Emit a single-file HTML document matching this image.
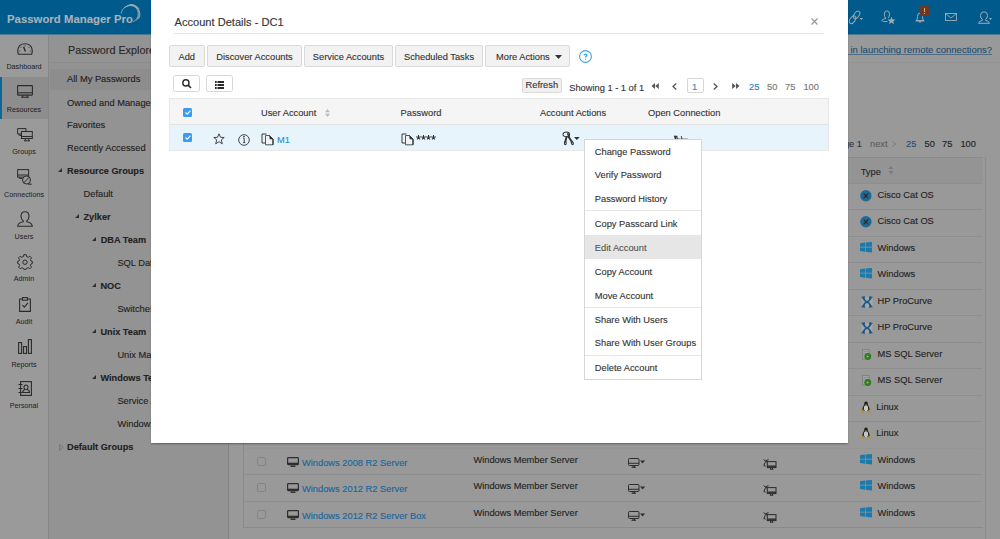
<!DOCTYPE html>
<html><head><meta charset="utf-8">
<style>
*{box-sizing:border-box;margin:0;padding:0}
html,body{width:1000px;height:539px;overflow:hidden}
body{position:relative;background:#999;font-family:"Liberation Sans",sans-serif;color:#1e1e1e;font-size:9.3px;line-height:1;-webkit-text-stroke:0.12px currentColor}
.a{position:absolute;white-space:nowrap;line-height:1}
svg{position:absolute;overflow:visible}
#hdr{left:0;top:0;width:1000px;height:35px;background:#005a8c;border-bottom:1px solid #4c7992}
#nav{left:0;top:35px;width:49px;height:504px;background:#9a9a9a;border-right:1px solid #868686}
#tree{left:49px;top:35px;width:180px;height:504px;background:#939393;border-right:1px solid #86837f}
.nl{position:absolute;left:0;width:48px;text-align:center;font-size:7.2px;color:#1c1c1c;line-height:1;-webkit-text-stroke:0}
.tr{position:absolute;font-size:9.3px;color:#1e1e1e;white-space:nowrap;margin-top:0.7px}
.tb{font-weight:bold;font-size:9.2px;color:#222}
.tri{position:absolute;width:0;height:0;border-style:solid}
#modal{left:151px;top:0;width:697px;height:443px;background:#fff;box-shadow:0 1.5px 1.5px rgba(0,0,0,.28)}
.btn{position:absolute;height:22px;background:#f2f2f2;border:1px solid #d9d9d9;border-radius:2px;color:#333;font-size:9.3px;line-height:20px;padding-top:1px;text-align:center}
.mi{position:absolute;left:10px;font-size:9.3px;color:#333;white-space:nowrap}
.rl{position:absolute;left:244px;width:738px;height:1px;background:#8e8e8e}
.bl{position:absolute;color:#1d5d87;font-size:9.3px;white-space:nowrap;margin-top:1px}
.bt{position:absolute;color:#222;font-size:9.3px;white-space:nowrap;margin-top:1.8px}
</style></head><body>
<!-- HEADER -->
<div id="hdr" class="a">
  <div class="a" style="left:7px;top:14.4px;font-size:11.3px;font-weight:bold;color:#a8b2b8;letter-spacing:0.05px">Password Manager Pro</div>
  <svg style="left:117.5px;top:3.3px" width="24" height="22" viewBox="0 0 26 24" fill="none" stroke="#a7b2b9" stroke-width="0.9">
    <path d="M3.2 11.5 C4.5 5.5 9 2.8 13 2.8 C18.5 2.8 22 6.8 22 12 C22 15.5 20 18.5 16.5 20.5"/>
    <path d="M6.5 5.5 C9.5 3.2 12.5 2.2 15 2.4 C20 3 23.2 7.2 23 12.5 C22.8 15.2 21.6 17.4 19.5 19.2"/>
    <path d="M10 3 C12.5 1.6 15.5 1.5 18 2.8 C21.8 4.8 24 8.5 23.8 12.8 C23.7 14.5 23.2 16 22.3 17.3"/>
    <path d="M13.5 1.8 C17 1.3 21 3.5 23 6.5"/>
  </svg>
  <!-- link icon -->
  <svg style="left:848px;top:10px" width="16" height="15" viewBox="0 0 16 15" fill="none" stroke="#9eacb4" stroke-width="0.95">
    <ellipse cx="8.6" cy="4.9" rx="2.5" ry="4.3" transform="rotate(35 8.6 4.9)"/>
    <ellipse cx="4.6" cy="9.7" rx="2.5" ry="4.3" transform="rotate(35 4.6 9.7)"/>
    <path d="M11.6 8 L15 8 L13.3 10 Z" fill="#9eacb4" stroke="none"/>
  </svg>
  <!-- person star -->
  <svg style="left:881px;top:10px" width="15" height="15" viewBox="0 0 15 15" fill="none" stroke="#9eacb4" stroke-width="0.95">
    <path d="M5 8.3 Q3.3 7.2 3.3 4.2 Q3.3 0.8 5.8 0.8 Q8.5 0.8 8.5 4.2 Q8.5 7 7 8.2"/>
    <path d="M5 8.3 Q0.8 9.2 0.8 10.6 Q1 11.8 6.5 11.6"/>
    <path d="M10.5 6.8 L11.6 9.5 L14.4 9.6 L12.3 11.4 L13 14.2 L10.5 12.6 L8 14.2 L8.7 11.4 L6.6 9.6 L9.4 9.5 Z" fill="#9eacb4" stroke="none"/>
  </svg>
  <!-- bell -->
  <svg style="left:915px;top:12px" width="10" height="11" viewBox="0 0 10 11" fill="none" stroke="#9eacb4" stroke-width="1">
    <path d="M1.5 8.5 Q2.5 7.5 2.5 4.5 Q2.5 1 5 1 Q7.5 1 7.5 4.5 Q7.5 7.5 8.5 8.5 Z M0.5 9 L9.5 9 M4 10.2 L6 10.2"/>
  </svg>
  <div class="a" style="left:920px;top:5.5px;width:9px;height:10px;background:#6e3726;border-radius:1px"></div>
  <div class="a" style="left:924px;top:7.5px;width:1px;height:4px;background:#d2b06a"></div>
  <div class="a" style="left:924px;top:12.5px;width:1px;height:1px;background:#d2b06a"></div>
  <!-- mail -->
  <svg style="left:945px;top:13px" width="12" height="8" viewBox="0 0 12 8" fill="none" stroke="#9eacb4" stroke-width="0.9">
    <rect x="0.5" y="0.5" width="11" height="7"/><path d="M0.5 0.5 L6 5 L11.5 0.5"/>
  </svg>
  <!-- user -->
  <svg style="left:978px;top:11px" width="14" height="13" viewBox="0 0 14 13" fill="none" stroke="#9eacb4" stroke-width="1">
    <path d="M6 0.8 Q9.5 0.8 9.5 4.5 Q9.5 7.5 7.5 8.5 L7.5 9.3 Q11 10 11.5 12.3 L0.5 12.3 Q1 10 4.5 9.3 L4.5 8.5 Q2.5 7.5 2.5 4.5 Q2.5 0.8 6 0.8 Z"/>
    <path d="M11 7 L14 7 L12.5 9 Z" fill="#9eacb4" stroke="none"/>
  </svg>
</div>
<!-- NAV -->
<div id="nav" class="a">
  <div class="a" style="left:0;top:42px;width:48px;height:42px;background:#8d8d8d"></div>
  <div class="a" style="left:0;top:42px;width:1.5px;height:42px;background:#0b679c"></div>
</div>
<svg style="left:17px;top:43px" width="16" height="12" viewBox="0 0 16 12" fill="none" stroke="#2b2b2b" stroke-width="1.1">
  <path d="M1.3 11.3 Q0.5 9 0.8 7 Q1.5 0.8 8 0.8 Q14.5 0.8 15.2 7 Q15.5 9 14.7 11.3 Z"/>
  <path d="M6.6 3.8 L8.4 8.6" stroke-width="1.4"/>
  <circle cx="8" cy="2.8" r="0.5" fill="#2b2b2b" stroke="none"/><circle cx="4" cy="4.2" r="0.5" fill="#2b2b2b" stroke="none"/><circle cx="12" cy="4.2" r="0.5" fill="#2b2b2b" stroke="none"/><circle cx="2.8" cy="8" r="0.5" fill="#2b2b2b" stroke="none"/><circle cx="13.2" cy="8" r="0.5" fill="#2b2b2b" stroke="none"/>
</svg>
<div class="nl" style="top:62.9px">Dashboard</div>
<svg style="left:17px;top:85px" width="16" height="13" viewBox="0 0 16 13" fill="none" stroke="#2b2b2b" stroke-width="1.1">
  <rect x="0.6" y="0.6" width="14.8" height="9.5" rx="0.5"/><path d="M0.6 7.8 L15.4 7.8"/><path d="M6 10.5 L5.5 12.3 M10 10.5 L10.5 12.3 M4 12.3 L12 12.3"/>
</svg>
<div class="nl" style="top:105.9px">Resources</div>
<svg style="left:17px;top:128px" width="16" height="14" viewBox="0 0 16 14" fill="none" stroke="#2b2b2b" stroke-width="1">
  <path d="M4 6 L0.6 6 L0.6 0.6 L9 0.6 L9 3"/><path d="M2 6 L2.5 7.5 L4 7.5"/>
  <rect x="4.5" y="3.5" width="10.8" height="7" fill="#9b9b9b"/><path d="M4.5 8.5 L15.3 8.5"/><path d="M8.5 10.5 L8 12.8 M11.5 10.5 L12 12.8 M7 12.8 L13 12.8"/>
</svg>
<div class="nl" style="top:147.9px">Groups</div>
<svg style="left:17px;top:169px" width="16" height="16" viewBox="0 0 16 16" fill="none" stroke="#2b2b2b" stroke-width="1">
  <rect x="0.6" y="0.6" width="11" height="7.5"/><path d="M0.6 6 L11.6 6 M2 8 L2.5 9.5 L5 9.5"/>
  <circle cx="9.5" cy="11" r="4" fill="#9b9b9b"/><path d="M6.8 13.8 L12.3 8.2"/><path d="M11 15.2 L14.8 15.2"/>
</svg>
<div class="nl" style="top:190.6px">Connections</div>
<svg style="left:17px;top:211px" width="16" height="16" viewBox="0 0 16 16" fill="none" stroke="#2b2b2b" stroke-width="1.1">
  <path d="M8 0.8 Q12 0.8 12 5 Q12 8.5 9.8 9.8 L9.8 10.8 Q15 11.8 15.3 15.2 L0.7 15.2 Q1 11.8 6.2 10.8 L6.2 9.8 Q4 8.5 4 5 Q4 0.8 8 0.8 Z"/>
</svg>
<div class="nl" style="top:232.8px">Users</div>
<svg style="left:17px;top:254px" width="16" height="16" viewBox="0 0 16 16" fill="none" stroke="#2b2b2b" stroke-width="1">
  <path d="M6.8 0.7 L9.2 0.7 L9.6 2.6 L11.2 3.3 L12.8 2.2 L14.5 3.9 L13.4 5.5 L14.1 7.1 L15.3 7.4 L15.3 9.6 L14.1 9.9 L13.4 11.5 L14.5 13.1 L12.8 14.8 L11.2 13.7 L9.6 14.4 L9.2 15.3 L6.8 15.3 L6.4 14.4 L4.8 13.7 L3.2 14.8 L1.5 13.1 L2.6 11.5 L1.9 9.9 L0.7 9.6 L0.7 7.4 L1.9 7.1 L2.6 5.5 L1.5 3.9 L3.2 2.2 L4.8 3.3 L6.4 2.6 Z"/>
  <circle cx="8" cy="8.2" r="2.2"/>
</svg>
<div class="nl" style="top:275.4px">Admin</div>
<svg style="left:19px;top:297px" width="12" height="15" viewBox="0 0 12 15" fill="none" stroke="#2b2b2b" stroke-width="1.1">
  <path d="M3.5 2 L0.6 2 L0.6 14.4 L11.4 14.4 L11.4 2 L8.5 2"/><rect x="3.5" y="0.6" width="5" height="2.6"/><path d="M3.3 8 L5.3 10.2 L9 5.8"/>
</svg>
<div class="nl" style="top:317.7px">Audit</div>
<svg style="left:18px;top:339px" width="14" height="15" viewBox="0 0 14 15" fill="none" stroke="#2b2b2b" stroke-width="1.1">
  <rect x="0.6" y="3.6" width="3" height="10.8"/><rect x="5.5" y="7.6" width="3" height="6.8"/><rect x="10.4" y="0.6" width="3" height="13.8"/>
</svg>
<div class="nl" style="top:360.7px">Reports</div>
<svg style="left:18px;top:381px" width="14" height="15" viewBox="0 0 14 15" fill="none" stroke="#2b2b2b" stroke-width="1.1">
  <rect x="2.6" y="0.6" width="10.8" height="13.8"/><path d="M0.5 3.5 L4.5 3.5 M0.5 7.5 L4.5 7.5 M0.5 11.5 L4.5 11.5"/>
  <path d="M8 4 Q10 4 10 6.3 Q10 8 9 8.5 Q11.5 9 11.5 11.5 L4.8 11.5 Q4.8 9 7 8.5 Q6 8 6 6.3 Q6 4 8 4 Z"/>
</svg>
<div class="nl" style="top:401.8px">Personal</div>

<!-- TREE -->
<div id="tree" class="a"></div>
<div class="a" style="left:50px;top:62px;width:178px;height:1px;background:#8b8b8b"></div>

<div class="a" style="left:50px;top:69px;width:178px;height:21px;background:#8d8d8d"></div>
<div class="tr" style="left:68px;top:44.3px;font-size:10.8px;color:#262626">Password Explorer</div>
<div class="tr" style="left:67px;top:74.6px">All My Passwords</div>
<div class="tr" style="left:67px;top:97.9px">Owned and Managed</div>
<div class="tr" style="left:67px;top:119.9px">Favorites</div>
<div class="tr" style="left:67px;top:143.1px">Recently Accessed</div>
<div class="tri" style="left:58.0px;top:168.2px;border-width:0 0 4.2px 4.2px;border-color:transparent transparent #2e2e2e transparent"></div>
<div class="tr tb" style="left:67px;top:166.7px">Resource Groups</div>
<div class="tr" style="left:83.5px;top:189.4px">Default</div>
<div class="tri" style="left:75.0px;top:214.2px;border-width:0 0 4.2px 4.2px;border-color:transparent transparent #2e2e2e transparent"></div>
<div class="tr tb" style="left:83.5px;top:212.6px">Zylker</div>
<div class="tri" style="left:92.0px;top:237.2px;border-width:0 0 4.2px 4.2px;border-color:transparent transparent #2e2e2e transparent"></div>
<div class="tr tb" style="left:100.7px;top:235.7px">DBA Team</div>
<div class="tr" style="left:117.4px;top:258.4px">SQL Database</div>
<div class="tri" style="left:92.0px;top:283.2px;border-width:0 0 4.2px 4.2px;border-color:transparent transparent #2e2e2e transparent"></div>
<div class="tr tb" style="left:100.4px;top:281.6px">NOC</div>
<div class="tr" style="left:117.4px;top:304.4px">Switches</div>
<div class="tri" style="left:92.0px;top:329.0px;border-width:0 0 4.2px 4.2px;border-color:transparent transparent #2e2e2e transparent"></div>
<div class="tr tb" style="left:100.4px;top:327.4px">Unix Team</div>
<div class="tr" style="left:117.4px;top:350.2px">Unix Machines</div>
<div class="tri" style="left:92.0px;top:374.7px;border-width:0 0 4.2px 4.2px;border-color:transparent transparent #2e2e2e transparent"></div>
<div class="tr tb" style="left:100.4px;top:373.2px">Windows Team</div>
<div class="tr" style="left:117.4px;top:396px">Service Accounts</div>
<div class="tr" style="left:117.4px;top:418.9px">Windows</div>
<svg style="left:59px;top:443.5px" width="5" height="7" viewBox="0 0 5 7" fill="none" stroke="#707070" stroke-width="0.8"><path d="M0.6 0.6 L4 3.5 L0.6 6.4 Z"/></svg>
<div class="tr tb" style="left:67px;top:441.9px">Default Groups</div>
<!-- MAIN BG -->
<div class="bl" style="left:0;width:992px;text-align:right;top:45.4px;text-decoration:underline;text-decoration-color:#4d6c84;color:#1f4f73;margin-top:-0.5px;font-size:9.5px">Need help in launching remote connections?</div>
<div class="a" style="left:230px;top:62px;width:770px;height:1px;background:#939393"></div>
<div class="bt" style="left:0;width:862px;text-align:right;top:138.6px;color:#333">&laquo; previous &nbsp;&nbsp; Page 1</div>
<div class="bt" style="left:870px;top:138.6px;color:#5e5e5e">next</div>
<svg style="left:892px;top:141.2px" width="4.5" height="6" viewBox="0 0 4.5 6" fill="none" stroke="#6e6e6e" stroke-width="0.8"><path d="M0.5 0.4 L3.8 3 L0.5 5.6"/></svg>
<div class="bt" style="left:906px;top:138.6px;color:#1f4f73">25</div>
<div class="bt" style="left:924.5px;top:138.6px">50</div>
<div class="bt" style="left:942px;top:138.6px">75</div>
<div class="bt" style="left:960.4px;top:138.6px">100</div>
<div class="a" style="left:243px;top:157px;width:740px;height:371px;border:1px solid #8a8a8a;border-right:none;background:#999"></div>
<div class="a" style="left:244px;top:158px;width:739px;height:25px;background:#949494"></div>
<div class="a" style="left:985px;top:157px;width:1px;height:382px;background:#8a8a8a"></div>
<div class="bt" style="left:860.7px;top:166px;color:#262626">Type</div>
<svg style="left:888px;top:165px" width="6" height="10" viewBox="0 0 6 10" fill="#7a7a7a"><path d="M0.5 4 L3 0.8 L5.5 4 Z M0.5 6 L3 9.2 L5.5 6 Z"/></svg>
<div class="rl" style="top:183px"></div>
<div class="rl" style="top:209px"></div>
<div class="rl" style="top:236px"></div>
<div class="rl" style="top:262px"></div>
<div class="rl" style="top:289px"></div>
<div class="rl" style="top:315px"></div>
<div class="rl" style="top:342px"></div>
<div class="rl" style="top:368px"></div>
<div class="rl" style="top:395px"></div>
<div class="rl" style="top:421px"></div>
<div class="rl" style="top:448px;background:#969494"></div>
<div class="rl" style="top:474px"></div>
<div class="rl" style="top:501px"></div>
<svg style="left:860.2px;top:189.7px" width="12" height="12" viewBox="0 0 12 12"><circle cx="5.9" cy="5.8" r="5.7" fill="#1b6b98"/><path d="M3.6 3.4 L8.3 8.3 M8.3 3.4 L3.6 8.3" stroke="#33251f" stroke-width="1.2"/><path d="M3.2 3 L4.8 3.6 L3.8 4.6 Z M8.7 8.7 L7.1 8.1 L8.1 7.1 Z" fill="#8a4a22"/></svg>
<div class="bt" style="left:877.5px;top:189.3px">Cisco Cat OS</div>
<svg style="left:860.2px;top:215.7px" width="12" height="12" viewBox="0 0 12 12"><circle cx="5.9" cy="5.8" r="5.7" fill="#1b6b98"/><path d="M3.6 3.4 L8.3 8.3 M8.3 3.4 L3.6 8.3" stroke="#33251f" stroke-width="1.2"/><path d="M3.2 3 L4.8 3.6 L3.8 4.6 Z M8.7 8.7 L7.1 8.1 L8.1 7.1 Z" fill="#8a4a22"/></svg>
<div class="bt" style="left:877.5px;top:215.3px">Cisco Cat OS</div>
<svg style="left:860.2px;top:242.1px" width="12" height="10.5" viewBox="0 0 12 10.5" fill="#1b7aab"><path d="M0 1.3 L5 0.6 L5 4.8 L0 4.8 Z M5.6 0.5 L12 0 L12 4.8 L5.6 4.8 Z M0 5.5 L5 5.5 L5 9.7 L0 9.1 Z M5.6 5.5 L12 5.5 L12 10.5 L5.6 9.8 Z"/></svg>
<div class="bt" style="left:877.5px;top:242.3px">Windows</div>
<svg style="left:860.2px;top:268.1px" width="12" height="10.5" viewBox="0 0 12 10.5" fill="#1b7aab"><path d="M0 1.3 L5 0.6 L5 4.8 L0 4.8 Z M5.6 0.5 L12 0 L12 4.8 L5.6 4.8 Z M0 5.5 L5 5.5 L5 9.7 L0 9.1 Z M5.6 5.5 L12 5.5 L12 10.5 L5.6 9.8 Z"/></svg>
<div class="bt" style="left:877.5px;top:268.3px">Windows</div>
<svg style="left:860.5px;top:295.5px" width="12" height="12" viewBox="0 0 12 12"><rect x="0.5" y="0.5" width="11" height="11" fill="#a6a6a6"/><path d="M2.2 2.2 Q4 5.6 6 6 Q8 6.4 9.8 9.8 M9.8 2.2 Q8 5.6 6 6 Q4 6.4 2.2 9.8" stroke="#1d5786" stroke-width="1.7" fill="none"/><path d="M0.6 1.2 L3.6 0.6 L3.2 3.4 Z M11.4 1.2 L8.4 0.6 L8.8 3.4 Z M0.6 10.8 L3.6 11.4 L3.2 8.6 Z M11.4 10.8 L8.4 11.4 L8.8 8.6 Z" fill="#1d5786" stroke="#1d5786" stroke-width="0.8" stroke-linejoin="round"/></svg>
<div class="bt" style="left:877.5px;top:295.3px">HP ProCurve</div>
<svg style="left:860.5px;top:321.5px" width="12" height="12" viewBox="0 0 12 12"><rect x="0.5" y="0.5" width="11" height="11" fill="#a6a6a6"/><path d="M2.2 2.2 Q4 5.6 6 6 Q8 6.4 9.8 9.8 M9.8 2.2 Q8 5.6 6 6 Q4 6.4 2.2 9.8" stroke="#1d5786" stroke-width="1.7" fill="none"/><path d="M0.6 1.2 L3.6 0.6 L3.2 3.4 Z M11.4 1.2 L8.4 0.6 L8.8 3.4 Z M0.6 10.8 L3.6 11.4 L3.2 8.6 Z M11.4 10.8 L8.4 11.4 L8.8 8.6 Z" fill="#1d5786" stroke="#1d5786" stroke-width="0.8" stroke-linejoin="round"/></svg>
<div class="bt" style="left:877.5px;top:321.3px">HP ProCurve</div>
<svg style="left:862px;top:348.5px" width="10" height="11" viewBox="0 0 10 11"><rect x="0.4" y="0.4" width="6.6" height="9.6" fill="#a3a3a3" stroke="#7d7d7d" stroke-width="0.8"/><path d="M1.2 2.5 L6.2 2.5 M1.2 4.5 L6.2 4.5 M1.2 6.5 L6.2 6.5" stroke="#8a8a8a" stroke-width="0.7"/><circle cx="5.8" cy="7.5" r="3.4" fill="#2e7d1e"/><path d="M4.8 6.3 L7 7.5 L4.8 8.7 Z" fill="#9cc090"/></svg>
<div class="bt" style="left:877.5px;top:348.3px">MS SQL Server</div>
<svg style="left:862px;top:374.5px" width="10" height="11" viewBox="0 0 10 11"><rect x="0.4" y="0.4" width="6.6" height="9.6" fill="#a3a3a3" stroke="#7d7d7d" stroke-width="0.8"/><path d="M1.2 2.5 L6.2 2.5 M1.2 4.5 L6.2 4.5 M1.2 6.5 L6.2 6.5" stroke="#8a8a8a" stroke-width="0.7"/><circle cx="5.8" cy="7.5" r="3.4" fill="#2e7d1e"/><path d="M4.8 6.3 L7 7.5 L4.8 8.7 Z" fill="#9cc090"/></svg>
<div class="bt" style="left:877.5px;top:374.3px">MS SQL Server</div>
<svg style="left:860.5px;top:401.2px" width="10" height="12" viewBox="0 0 10 12"><ellipse cx="5" cy="2.8" rx="1.8" ry="2.4" fill="#1e1e1e"/><path d="M3.2 3.5 Q1 7 1.2 10 L8.8 10 Q9 7 6.8 3.5 Z" fill="#1e1e1e"/><ellipse cx="5" cy="7.3" rx="2.1" ry="3" fill="#c8c8c8"/><path d="M0 10 L2.2 8.3 L3.6 11.2 L1.2 11.5 Z M10 10 L7.8 8.3 L6.4 11.2 L8.8 11.5 Z" fill="#b8901a"/><path d="M4.2 3.3 L5.8 3.3 L5 4.4 Z" fill="#c09a1a"/></svg>
<div class="bt" style="left:876.2px;top:401.3px">Linux</div>
<svg style="left:860.5px;top:427.2px" width="10" height="12" viewBox="0 0 10 12"><ellipse cx="5" cy="2.8" rx="1.8" ry="2.4" fill="#1e1e1e"/><path d="M3.2 3.5 Q1 7 1.2 10 L8.8 10 Q9 7 6.8 3.5 Z" fill="#1e1e1e"/><ellipse cx="5" cy="7.3" rx="2.1" ry="3" fill="#c8c8c8"/><path d="M0 10 L2.2 8.3 L3.6 11.2 L1.2 11.5 Z M10 10 L7.8 8.3 L6.4 11.2 L8.8 11.5 Z" fill="#b8901a"/><path d="M4.2 3.3 L5.8 3.3 L5 4.4 Z" fill="#c09a1a"/></svg>
<div class="bt" style="left:876.2px;top:427.3px">Linux</div>
<svg style="left:860.2px;top:454.1px" width="12" height="10.5" viewBox="0 0 12 10.5" fill="#1b7aab"><path d="M0 1.3 L5 0.6 L5 4.8 L0 4.8 Z M5.6 0.5 L12 0 L12 4.8 L5.6 4.8 Z M0 5.5 L5 5.5 L5 9.7 L0 9.1 Z M5.6 5.5 L12 5.5 L12 10.5 L5.6 9.8 Z"/></svg>
<div class="bt" style="left:877.5px;top:454.3px">Windows</div>
<svg style="left:860.2px;top:480.1px" width="12" height="10.5" viewBox="0 0 12 10.5" fill="#1b7aab"><path d="M0 1.3 L5 0.6 L5 4.8 L0 4.8 Z M5.6 0.5 L12 0 L12 4.8 L5.6 4.8 Z M0 5.5 L5 5.5 L5 9.7 L0 9.1 Z M5.6 5.5 L12 5.5 L12 10.5 L5.6 9.8 Z"/></svg>
<div class="bt" style="left:877.5px;top:480.3px">Windows</div>
<svg style="left:860.2px;top:507.1px" width="12" height="10.5" viewBox="0 0 12 10.5" fill="#1b7aab"><path d="M0 1.3 L5 0.6 L5 4.8 L0 4.8 Z M5.6 0.5 L12 0 L12 4.8 L5.6 4.8 Z M0 5.5 L5 5.5 L5 9.7 L0 9.1 Z M5.6 5.5 L12 5.5 L12 10.5 L5.6 9.8 Z"/></svg>
<div class="bt" style="left:877.5px;top:507.3px">Windows</div>
<div class="a" style="left:257.2px;top:457px;width:8.7px;height:8.7px;border:1px solid #848484;border-radius:2px"></div>
<svg style="left:287px;top:456.9px" width="12" height="10" viewBox="0 0 12 10" fill="none" stroke="#2e2e2e" stroke-width="1.2"><rect x="0.6" y="0.6" width="10.8" height="7" rx="0.8"/><path d="M0.6 6.6 L11.4 6.6" stroke-width="1.8"/><path d="M3.5 9.4 L8.5 9.4 M5 8 L4.6 9.4 M7 8 L7.4 9.4" stroke-width="1"/></svg>
<div class="bl" style="left:302px;top:458.0px;color:#1566a0">Windows 2008 R2 Server</div>
<div class="bt" style="left:473.4px;top:453.8px">Windows Member Server</div>
<svg style="left:628px;top:458px" width="18" height="10" viewBox="0 0 18 10" fill="none" stroke="#2e2e2e" stroke-width="1"><rect x="0.5" y="0.5" width="10.5" height="7" rx="1"/><path d="M0.5 5.3 L11 5.3"/><path d="M3.5 9.3 L8 9.3 M5 7.5 L5 9.3 M6.5 7.5 L6.5 9.3"/><path d="M12 2.6 L17.2 2.6 L14.6 5.5 Z" fill="#2e2e2e" stroke="none"/></svg>
<svg style="left:763px;top:459px" width="14" height="11" viewBox="0 0 14 11" fill="none" stroke="#2a2a2a" stroke-width="1"><path d="M0.6 0.6 L2.6 2 L4.2 3.5 M4 0.8 L2.2 3.5 L0.8 6.5 L2.6 7.2 M2.6 2 L5.5 0.6"/><rect x="4.3" y="2.6" width="8.7" height="6" fill="#9a9a9a"/><path d="M4.3 7.2 L13 7.2" stroke-width="1.4"/><path d="M7 10.2 L10.3 10.2 M7.5 8.6 L7.5 10.2 M9.5 8.6 L9.5 10.2"/></svg>
<div class="a" style="left:257.2px;top:483px;width:8.7px;height:8.7px;border:1px solid #848484;border-radius:2px"></div>
<svg style="left:287px;top:482.9px" width="12" height="10" viewBox="0 0 12 10" fill="none" stroke="#2e2e2e" stroke-width="1.2"><rect x="0.6" y="0.6" width="10.8" height="7" rx="0.8"/><path d="M0.6 6.6 L11.4 6.6" stroke-width="1.8"/><path d="M3.5 9.4 L8.5 9.4 M5 8 L4.6 9.4 M7 8 L7.4 9.4" stroke-width="1"/></svg>
<div class="bl" style="left:302px;top:484.0px;color:#1566a0">Windows 2012 R2 Server</div>
<div class="bt" style="left:473.4px;top:479.8px">Windows Member Server</div>
<svg style="left:628px;top:484px" width="18" height="10" viewBox="0 0 18 10" fill="none" stroke="#2e2e2e" stroke-width="1"><rect x="0.5" y="0.5" width="10.5" height="7" rx="1"/><path d="M0.5 5.3 L11 5.3"/><path d="M3.5 9.3 L8 9.3 M5 7.5 L5 9.3 M6.5 7.5 L6.5 9.3"/><path d="M12 2.6 L17.2 2.6 L14.6 5.5 Z" fill="#2e2e2e" stroke="none"/></svg>
<svg style="left:763px;top:485px" width="14" height="11" viewBox="0 0 14 11" fill="none" stroke="#2a2a2a" stroke-width="1"><path d="M0.6 0.6 L2.6 2 L4.2 3.5 M4 0.8 L2.2 3.5 L0.8 6.5 L2.6 7.2 M2.6 2 L5.5 0.6"/><rect x="4.3" y="2.6" width="8.7" height="6" fill="#9a9a9a"/><path d="M4.3 7.2 L13 7.2" stroke-width="1.4"/><path d="M7 10.2 L10.3 10.2 M7.5 8.6 L7.5 10.2 M9.5 8.6 L9.5 10.2"/></svg>
<div class="a" style="left:257.2px;top:510px;width:8.7px;height:8.7px;border:1px solid #848484;border-radius:2px"></div>
<svg style="left:287px;top:509.9px" width="12" height="10" viewBox="0 0 12 10" fill="none" stroke="#2e2e2e" stroke-width="1.2"><rect x="0.6" y="0.6" width="10.8" height="7" rx="0.8"/><path d="M0.6 6.6 L11.4 6.6" stroke-width="1.8"/><path d="M3.5 9.4 L8.5 9.4 M5 8 L4.6 9.4 M7 8 L7.4 9.4" stroke-width="1"/></svg>
<div class="bl" style="left:302px;top:511.0px;color:#1566a0">Windows 2012 R2 Server Box</div>
<div class="bt" style="left:473.4px;top:506.8px">Windows Member Server</div>
<svg style="left:628px;top:511px" width="18" height="10" viewBox="0 0 18 10" fill="none" stroke="#2e2e2e" stroke-width="1"><rect x="0.5" y="0.5" width="10.5" height="7" rx="1"/><path d="M0.5 5.3 L11 5.3"/><path d="M3.5 9.3 L8 9.3 M5 7.5 L5 9.3 M6.5 7.5 L6.5 9.3"/><path d="M12 2.6 L17.2 2.6 L14.6 5.5 Z" fill="#2e2e2e" stroke="none"/></svg>
<svg style="left:763px;top:512px" width="14" height="11" viewBox="0 0 14 11" fill="none" stroke="#2a2a2a" stroke-width="1"><path d="M0.6 0.6 L2.6 2 L4.2 3.5 M4 0.8 L2.2 3.5 L0.8 6.5 L2.6 7.2 M2.6 2 L5.5 0.6"/><rect x="4.3" y="2.6" width="8.7" height="6" fill="#9a9a9a"/><path d="M4.3 7.2 L13 7.2" stroke-width="1.4"/><path d="M7 10.2 L10.3 10.2 M7.5 8.6 L7.5 10.2 M9.5 8.6 L9.5 10.2"/></svg>
<!-- MODAL -->
<div id="modal" class="a"></div>
<div class="a" style="left:174.5px;top:16.6px;font-size:11.1px;color:#333">Account Details - DC1</div>
<svg style="left:811px;top:18px" width="7" height="7" viewBox="0 0 7 7" stroke="#9a9a9a" stroke-width="1.3"><path d="M0.5 0.5 L6.5 6.5 M6.5 0.5 L0.5 6.5"/></svg>
<div class="a" style="left:174px;top:33px;width:650px;height:1px;background:#e6e6e6"></div>
<div class="btn" style="left:169px;top:45px;width:35.5px">Add</div>
<div class="btn" style="left:207px;top:45px;width:95px">Discover Accounts</div>
<div class="btn" style="left:304px;top:45px;width:89px">Service Accounts</div>
<div class="btn" style="left:395px;top:45px;width:88px">Scheduled Tasks</div>
<div class="btn" style="left:485px;top:45px;width:85px;text-align:left;padding-left:10px">More Actions</div>
<svg style="left:554.5px;top:55px" width="7" height="4" viewBox="0 0 7 4" fill="#333"><path d="M0 0 L7 0 L3.5 4 Z"/></svg>
<svg style="left:579px;top:49.7px" width="13" height="13" viewBox="0 0 13 13" fill="none" stroke="#3ea2f0" stroke-width="1.1"><circle cx="6.5" cy="6.5" r="5.9"/></svg>
<svg style="left:579px;top:49.7px" width="13" height="13" viewBox="0 0 13 13" fill="none" stroke="#3ea2f0" stroke-width="1.25"><path d="M5.1 5.4 Q5.1 4 6.6 4 Q8 4 8 5.3 Q8 6 7.2 6.4 Q6.6 6.7 6.6 7.6"/><circle cx="6.6" cy="9.1" r="0.7" fill="#3ea2f0" stroke="none"/></svg>
<!-- search/list -->
<div class="a" style="left:172.5px;top:75px;width:27px;height:17px;border:1px solid #d8d8d8;border-radius:2.5px;background:#fff"></div>
<svg style="left:181.5px;top:79px" width="10" height="10" viewBox="0 0 10 10" fill="none" stroke="#2a2a2a" stroke-width="1.4"><circle cx="3.9" cy="3.9" r="3.1"/><path d="M6.1 6.1 L9 9" stroke-width="1.6"/></svg>
<div class="a" style="left:206px;top:75px;width:26.5px;height:17px;border:1px solid #d8d8d8;border-radius:2.5px;background:#fff"></div>
<svg style="left:215px;top:81px" width="9" height="8" viewBox="0 0 9 8" fill="#2a2a2a"><rect x="0" y="0" width="1.7" height="2"/><rect x="2.5" y="0" width="6.5" height="2"/><rect x="0" y="3" width="1.7" height="2"/><rect x="2.5" y="3" width="6.5" height="2"/><rect x="0" y="6" width="1.7" height="2"/><rect x="2.5" y="6" width="6.5" height="2"/></svg>
<!-- refresh + pagination -->
<div class="a" style="left:522px;top:77.6px;width:39.6px;height:15px;background:#f0f0f0;border:1px solid #dadada;border-radius:2px;font-size:9.3px;color:#333;text-align:center;line-height:13px">Refresh</div>
<div class="a" style="margin-top:1px;left:569.2px;top:82.6px;font-size:9.3px;color:#333">Showing 1 - 1 of 1</div>
<svg style="left:650.5px;top:83px" width="8" height="6" viewBox="0 0 8 6" fill="#555"><path d="M4 0 L0.5 3 L4 6 Z M7.8 0 L4.3 3 L7.8 6 Z"/></svg>
<svg style="left:671.5px;top:82.5px" width="5" height="7" viewBox="0 0 5 7" fill="none" stroke="#555" stroke-width="1.3"><path d="M4.3 0.5 L1 3.5 L4.3 6.5"/></svg>
<div class="a" style="left:686.5px;top:77.7px;width:17px;height:15px;border:1px solid #d6d6d6;border-radius:1.5px"></div>
<div class="a" style="margin-top:1px;left:692px;top:81.6px;font-size:9.3px;color:#2a86c8">1</div>
<svg style="left:713px;top:82.5px" width="5" height="7" viewBox="0 0 5 7" fill="none" stroke="#555" stroke-width="1.3"><path d="M0.7 0.5 L4 3.5 L0.7 6.5"/></svg>
<svg style="left:731.5px;top:83px" width="8" height="6" viewBox="0 0 8 6" fill="#555"><path d="M0.2 0 L3.7 3 L0.2 6 Z M4 0 L7.5 3 L4 6 Z"/></svg>
<div class="a" style="margin-top:1px;left:749px;top:81.6px;font-size:9.3px;color:#2a7fc0">25</div>
<div class="a" style="margin-top:1px;left:767px;top:81.6px;font-size:9.3px;color:#777">50</div>
<div class="a" style="margin-top:1px;left:785px;top:81.6px;font-size:9.3px;color:#777">75</div>
<div class="a" style="margin-top:1px;left:803.4px;top:81.6px;font-size:9.3px;color:#777">100</div>
<!-- table -->
<div class="a" style="left:169px;top:98px;width:659.5px;height:53px;border:1px solid #e8e8e8;background:#e8f4fc"></div>
<div class="a" style="left:170px;top:99px;width:657.5px;height:26px;background:#f5f5f5;border-bottom:1px solid #e3e3e3"></div>
<div class="a" style="left:183px;top:108px;width:9px;height:9px;border-radius:1.5px;background:#3b9bf0"></div>
<svg style="left:184.5px;top:110px" width="6" height="5" viewBox="0 0 6 5" fill="none" stroke="#fff" stroke-width="1.1"><path d="M0.5 2.5 L2.2 4.2 L5.5 0.6"/></svg>
<div class="a" style="margin-top:1px;left:261px;top:108.1px;font-size:9.3px;color:#333">User Account</div>
<svg style="left:325px;top:108.5px" width="5" height="8" viewBox="0 0 5 8" fill="#bbb"><path d="M0 3.2 L2.5 0 L5 3.2 Z M0 4.8 L2.5 8 L5 4.8 Z"/></svg>
<div class="a" style="margin-top:1px;left:400.6px;top:108.1px;font-size:9.3px;color:#333">Password</div>
<div class="a" style="margin-top:1px;left:540px;top:108.1px;font-size:9.3px;color:#333">Account Actions</div>
<div class="a" style="margin-top:1px;left:648px;top:108.1px;font-size:9.3px;color:#333">Open Connection</div>
<!-- row -->
<div class="a" style="left:183px;top:133px;width:9px;height:9px;border-radius:1.5px;background:#3b9bf0"></div>
<svg style="left:184.5px;top:135px" width="6" height="5" viewBox="0 0 6 5" fill="none" stroke="#fff" stroke-width="1.1"><path d="M0.5 2.5 L2.2 4.2 L5.5 0.6"/></svg>
<svg style="left:212.5px;top:132.5px" width="12" height="12" viewBox="0 0 12 12" fill="none" stroke="#333" stroke-width="0.9"><path d="M6 0.8 L7.5 4.3 L11.2 4.5 L8.3 6.9 L9.3 10.8 L6 8.7 L2.7 10.8 L3.7 6.9 L0.8 4.5 L4.5 4.3 Z"/></svg>
<svg style="left:237.5px;top:133.5px" width="12" height="12" viewBox="0 0 12 12" fill="none" stroke="#333" stroke-width="0.9"><circle cx="6" cy="6" r="5.3"/><path d="M5 4.2 L6.2 4.2 L6.2 8.6 M5 8.6 L7.3 8.6" /><circle cx="6" cy="2.7" r="0.4" fill="#333"/></svg>
<svg style="left:261px;top:132.5px" width="13" height="13" viewBox="0 0 13 13" fill="none" stroke-width="1"><path d="M5.5 1 L1 1 L1 10 L4 10" stroke="#3a3a3a"/><path d="M4.5 2.5 L8.5 2.5 L12 6 L12 11.8 L4.5 11.8 Z" fill="#f3f3f3" stroke="#555"/><path d="M12 6 L12 11.8" stroke="#222"/><path d="M8.5 2.5 L12 6 L9 6 Z" fill="#333" stroke="#333" stroke-width="0.6"/></svg>
<div class="a" style="margin-top:1px;left:277px;top:135px;font-size:9.3px;color:#2a8ee0">M1</div>
<svg style="left:400.5px;top:132.5px" width="13" height="13" viewBox="0 0 13 13" fill="none" stroke-width="1"><path d="M5.5 1 L1 1 L1 10 L4 10" stroke="#3a3a3a"/><path d="M4.5 2.5 L8.5 2.5 L12 6 L12 11.8 L4.5 11.8 Z" fill="#f3f3f3" stroke="#555"/><path d="M12 6 L12 11.8" stroke="#222"/><path d="M8.5 2.5 L12 6 L9 6 Z" fill="#333" stroke="#333" stroke-width="0.6"/></svg>
<svg style="left:416.3px;top:135px" width="5" height="5" viewBox="-2.5 -2.5 5 5" stroke="#333" stroke-width="1.05"><path d="M0 -2.4 L0 0 M0 0 L2.3 -0.75 M0 0 L1.4 1.95 M0 0 L-1.4 1.95 M0 0 L-2.3 -0.75"/></svg><svg style="left:421.2px;top:135px" width="5" height="5" viewBox="-2.5 -2.5 5 5" stroke="#333" stroke-width="1.05"><path d="M0 -2.4 L0 0 M0 0 L2.3 -0.75 M0 0 L1.4 1.95 M0 0 L-1.4 1.95 M0 0 L-2.3 -0.75"/></svg><svg style="left:426.1px;top:135px" width="5" height="5" viewBox="-2.5 -2.5 5 5" stroke="#333" stroke-width="1.05"><path d="M0 -2.4 L0 0 M0 0 L2.3 -0.75 M0 0 L1.4 1.95 M0 0 L-1.4 1.95 M0 0 L-2.3 -0.75"/></svg><svg style="left:431.0px;top:135px" width="5" height="5" viewBox="-2.5 -2.5 5 5" stroke="#333" stroke-width="1.05"><path d="M0 -2.4 L0 0 M0 0 L2.3 -0.75 M0 0 L1.4 1.95 M0 0 L-1.4 1.95 M0 0 L-2.3 -0.75"/></svg>
<svg style="left:562px;top:131px" width="19" height="15" viewBox="0 0 19 15" fill="none" stroke="#333" stroke-width="1.05"><ellipse cx="4.3" cy="3.4" rx="3.3" ry="2.4"/><path d="M5.5 2.2 L7.2 6.2" stroke-width="1.6"/><path d="M4.6 5.4 L3.4 10.5" stroke-width="1.9"/><path d="M6.4 5.4 L9.6 10.4" stroke-width="1.9"/><ellipse cx="3.3" cy="12" rx="1.45" ry="2.2" fill="#3a3a3a" stroke="none"/><ellipse cx="10.3" cy="12" rx="1.5" ry="2.2" transform="rotate(-20 10.3 12)" fill="#3a3a3a" stroke="none"/><ellipse cx="3.3" cy="12.3" rx="0.35" ry="0.8" fill="#e8f4fc" stroke="none"/><ellipse cx="10.3" cy="12.3" rx="0.35" ry="0.8" fill="#e8f4fc" stroke="none"/><path d="M12 6 L17.7 6 L14.85 8.9 Z" fill="#333" stroke="none"/></svg>
<svg style="left:674px;top:134.5px" width="15" height="6" viewBox="0 0 15 6" fill="none" stroke="#333" stroke-width="1.1"><path d="M0.8 0.6 L1.8 4.5" stroke-width="1.6"/><path d="M0.5 1.6 L3.6 1.2 M2.2 2.6 L4.2 3.5"/><path d="M3.6 4.3 L13.8 4.3" stroke-width="1.2"/><path d="M7.2 1 L8 4" stroke-width="0.9"/></svg>
<!-- dropdown -->
<div class="a" style="left:584px;top:139px;width:118px;height:241px;background:#fff;border:1px solid #d6d6d6"></div>
<div class="a" style="left:585px;top:210px;width:116px;height:1px;background:#e6e6e6"></div>
<div class="a" style="left:585px;top:235px;width:116px;height:24px;background:#e6e6e6"></div>
<div class="a" style="left:585px;top:307px;width:116px;height:1px;background:#e6e6e6"></div>
<div class="a" style="left:585px;top:355px;width:116px;height:1px;background:#e6e6e6"></div>
<div class="a" style="margin-top:1px;left:594.8px;top:147.4px;font-size:9.3px;color:#333">Change Password</div>
<div class="a" style="margin-top:1px;left:594.8px;top:170.3px;font-size:9.3px;color:#333">Verify Password</div>
<div class="a" style="margin-top:1px;left:594.8px;top:193.9px;font-size:9.3px;color:#333">Password History</div>
<div class="a" style="margin-top:1px;left:594.8px;top:218.5px;font-size:9.3px;color:#333">Copy Passcard Link</div>
<div class="a" style="margin-top:1px;left:594.8px;top:243.1px;font-size:9.3px;color:#555">Edit Account</div>
<div class="a" style="margin-top:1px;left:594.8px;top:266.8px;font-size:9.3px;color:#333">Copy Account</div>
<div class="a" style="margin-top:1px;left:594.8px;top:290.6px;font-size:9.3px;color:#333">Move Account</div>
<div class="a" style="margin-top:1px;left:594.8px;top:314.8px;font-size:9.3px;color:#333">Share With Users</div>
<div class="a" style="margin-top:1px;left:594.8px;top:338.1px;font-size:9.3px;color:#333">Share With User Groups</div>
<div class="a" style="margin-top:1px;left:594.8px;top:362.8px;font-size:9.3px;color:#333">Delete Account</div>
</body></html>
